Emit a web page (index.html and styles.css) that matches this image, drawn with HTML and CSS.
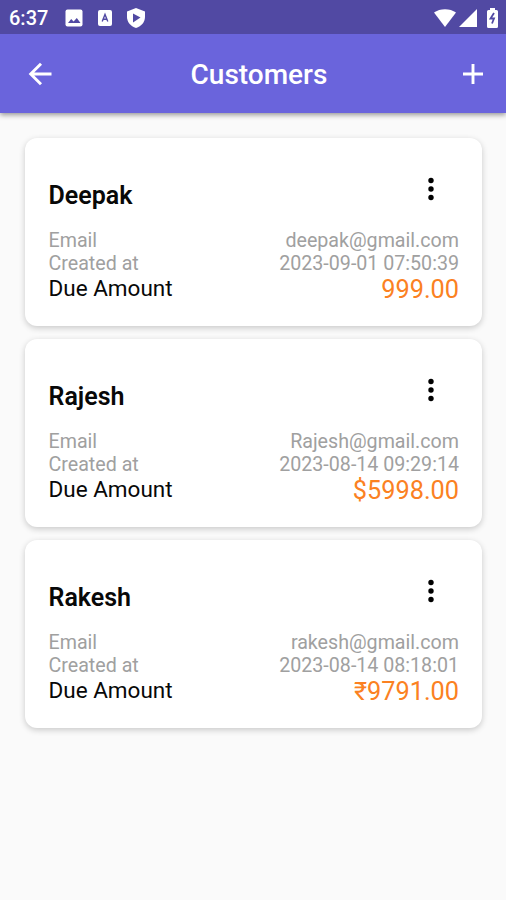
FILE: index.html
```html
<!DOCTYPE html>
<html lang="en">
<head>
<meta charset="utf-8">
<title>Customers</title>
<link rel="stylesheet" href="styles.css">
</head>
<body>
<header class="top">
  <div class="status">
    <span class="clock">6:37</span>
    <svg width="18" height="18" viewBox="0 0 18 18"><rect x=".5" y=".5" width="17" height="17" rx="2" fill="#fff"/><path d="M3 14l3.200-4 2.400 2.500 3.200-3.500 3.700 5z" fill="#5149a3"/></svg>
    <svg class="s-a" width="14" height="16" viewBox="0 0 14 16"><rect width="14" height="16" rx="2" fill="#fff"/><path d="M4.200 11.500L7 4.500l2.800 7M5.200 9.300h3.600" fill="none" stroke="#5149a3" stroke-width="1.400"/></svg>
    <svg class="s-shield" width="18" height="20" viewBox="0 0 18 20"><path d="M9 0l9 3.500V9c0 5-3.500 9-9 11-5.500-2-9-6-9-11V3.500z" fill="#fff"/><path d="M6 5.500l7.500 4-7.500 5z" fill="#5149a3"/></svg>
    <span class="grow"></span>
    <svg width="22" height="18" viewBox="0 0 22 18"><path d="M0 3.500C6-1 16-1 22 3.500L11 18z" fill="#fff"/></svg>
    <svg class="s-signal" width="18" height="18" viewBox="0 0 18 18"><path d="M18 0v18H0z" fill="#fff"/></svg>
    <svg class="s-battery" width="11" height="20" viewBox="0 0 11 20"><path d="M3 0h5v2h1.500q1.500 0 1.500 1.500v15q0 1.500-1.500 1.500h-8Q0 20 0 18.500v-15Q0 2 1.500 2H3z" fill="#fff"/><path d="M7 5L3.500 10.500h3.500L5 15.500" fill="none" stroke="#5149a3" stroke-width="1.800"/></svg>
  </div>
  <div class="bar">
    <svg width="24" height="24" viewBox="0 0 24 24"><path d="M23.500 12H3M13 1.700L2.700 12 13 22.300" fill="none" stroke="#fff" stroke-width="2.900"/></svg>
    <h1>Customers</h1>
    <svg width="22" height="22" viewBox="0 0 22 22"><path d="M11 1v20M1 11h20" stroke="#fff" stroke-width="2.900"/></svg>
  </div>
</header>
<main>
  <article class="card">
    <div class="head"><h2>Deepak</h2><svg class="more" width="6" height="24" viewBox="0 0 6 24"><circle cx="3" cy="3.500" r="2.700"/><circle cx="3" cy="12" r="2.700"/><circle cx="3" cy="20.500" r="2.700"/></svg></div>
    <div class="row"><span>Email</span><span>deepak@gmail.com</span></div>
    <div class="row"><span>Created at</span><span>2023-09-01 07:50:39</span></div>
    <div class="row due"><span>Due Amount</span><span class="amount">999.00</span></div>
  </article>
  <article class="card">
    <div class="head"><h2>Rajesh</h2><svg class="more" width="6" height="24" viewBox="0 0 6 24"><circle cx="3" cy="3.500" r="2.700"/><circle cx="3" cy="12" r="2.700"/><circle cx="3" cy="20.500" r="2.700"/></svg></div>
    <div class="row"><span>Email</span><span>Rajesh@gmail.com</span></div>
    <div class="row"><span>Created at</span><span>2023-08-14 09:29:14</span></div>
    <div class="row due"><span>Due Amount</span><span class="amount">$5998.00</span></div>
  </article>
  <article class="card">
    <div class="head"><h2>Rakesh</h2><svg class="more" width="6" height="24" viewBox="0 0 6 24"><circle cx="3" cy="3.500" r="2.700"/><circle cx="3" cy="12" r="2.700"/><circle cx="3" cy="20.500" r="2.700"/></svg></div>
    <div class="row"><span>Email</span><span>rakesh@gmail.com</span></div>
    <div class="row"><span>Created at</span><span>2023-08-14 08:18:01</span></div>
    <div class="row due"><span>Due Amount</span><span class="amount">₹9791.00</span></div>
  </article>
</main>
</body>
</html>
```
FILE: styles.css
```css
* { box-sizing: border-box; }
body { margin: 0; min-height: 900px; background: #fafafa; font-family: Roboto, "Liberation Sans", sans-serif; color: #080808; }
svg { display: block; flex: none; }
.top { height: 113px; background: #6a64dc; box-shadow: 0 2px 5px rgba(0,0,0,.4); }
.status { height: 34px; background: #5149a3; display: flex; align-items: center; padding: 1px 8px 0 9px; color: #fff; }
.clock { font-size: 20px; font-weight: 500; width: 56px; }
.s-a { margin-left: 15px; }
.s-shield { margin-left: 15px; }
.grow { flex: 1; }
.s-signal { margin-left: 3px; }
.s-battery { margin-left: 10px; }
.bar { height: 79px; display: flex; align-items: center; justify-content: space-between; padding: 0 22px 0 28px; }
h1 { margin: 2px 0 0 4px; color: #fff; font-size: 28px; font-weight: 500; line-height: 32px; }
main { display: flex; flex-direction: column; gap: 13.500px; padding: 25px 24px 25px 25px; }
.card { height: 187.500px; padding: 24px 23px 0 24px; background: #fff; border-radius: 12px; box-shadow: 0 2px 6px rgba(0,0,0,.2); }
.head { display: flex; justify-content: space-between; height: 68px; padding-right: 25px; }
h2 { margin: 18px 0 0 -.5px; font-size: 25px; font-weight: 600; line-height: 32px; }
.more { margin-top: 15px; fill: #000; }
.row { display: flex; justify-content: space-between; font-size: 19.650px; font-weight: 400; line-height: 22.500px; color: #a0a0a0; margin: 0 0 0 -.5px; }
.due { font-size: 22.500px; line-height: 26px; color: #080808; }
.amount { font-size: 25.300px; line-height: 29px; color: #fb8122; }
```
